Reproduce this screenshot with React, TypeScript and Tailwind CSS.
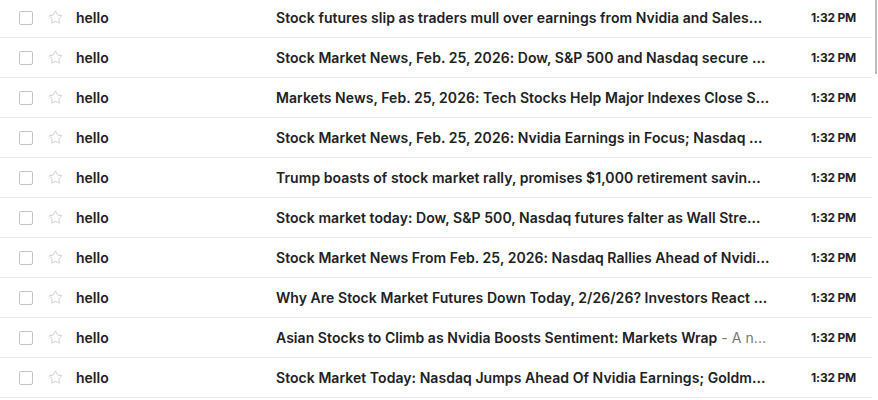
import { Star } from "lucide-react";

type Mail = {
  sender: string;
  subject: string;
  snippet?: string;
  time: string;
};

const mails: Mail[] = [
  { sender: "hello", subject: "Stock futures slip as traders mull over earnings from Nvidia and Sales...", time: "1:32 PM" },
  { sender: "hello", subject: "Stock Market News, Feb. 25, 2026: Dow, S&P 500 and Nasdaq secure ...", time: "1:32 PM" },
  { sender: "hello", subject: "Markets News, Feb. 25, 2026: Tech Stocks Help Major Indexes Close S...", time: "1:32 PM" },
  { sender: "hello", subject: "Stock Market News, Feb. 25, 2026: Nvidia Earnings in Focus; Nasdaq ...", time: "1:32 PM" },
  { sender: "hello", subject: "Trump boasts of stock market rally, promises $1,000 retirement savin...", time: "1:32 PM" },
  { sender: "hello", subject: "Stock market today: Dow, S&P 500, Nasdaq futures falter as Wall Stre...", time: "1:32 PM" },
  { sender: "hello", subject: "Stock Market News From Feb. 25, 2026: Nasdaq Rallies Ahead of Nvidi...", time: "1:32 PM" },
  { sender: "hello", subject: "Why Are Stock Market Futures Down Today, 2/26/26? Investors React ...", time: "1:32 PM" },
  {
    sender: "hello",
    subject: "Asian Stocks to Climb as Nvidia Boosts Sentiment: Markets Wrap",
    snippet: "A n...",
    time: "1:32 PM",
  },
  { sender: "hello", subject: "Stock Market Today: Nasdaq Jumps Ahead Of Nvidia Earnings; Goldm...", time: "1:32 PM" },
];

function MailRow({ mail }: { mail: Mail }) {
  return (
    <div className="flex h-10 items-center border-b border-[#eaeaea]">
      <div className="ml-[19px] h-[14px] w-[14px] shrink-0 rounded-[2px] border border-[#c4c4c4]" />
      <Star className="ml-[15px] h-[15px] w-[15px] shrink-0 text-[#c4c4c4]" strokeWidth={1.3} />
      <span className="ml-[13px] w-[200px] shrink-0 text-[14px] font-semibold text-[#202124]">
        {mail.sender}
      </span>
      <div className="w-[510px] shrink-0 whitespace-nowrap text-[14px] font-semibold tracking-[0.05px] text-[#202124]">
        {mail.subject}
        {mail.snippet && (
          <span className="font-normal text-[#777]"> - {mail.snippet}</span>
        )}
      </div>
      <span className="ml-auto mr-[16px] text-[12px] font-bold tracking-[-0.2px] text-[#202124]">
        {mail.time}
      </span>
    </div>
  );
}

export default function App() {
  return (
    <div
      className="relative h-[400px] w-[878px] overflow-hidden bg-white"
      style={{ fontFamily: "Inter, 'Noto Sans', sans-serif" }}
    >
      <div className="mt-[-2px] w-[872px]">
        {mails.map((m, i) => (
          <MailRow key={i} mail={m} />
        ))}
      </div>
      <div className="absolute right-[1px] top-0 h-[74px] w-[2px] bg-[#bdbdbd]" />
    </div>
  );
}
